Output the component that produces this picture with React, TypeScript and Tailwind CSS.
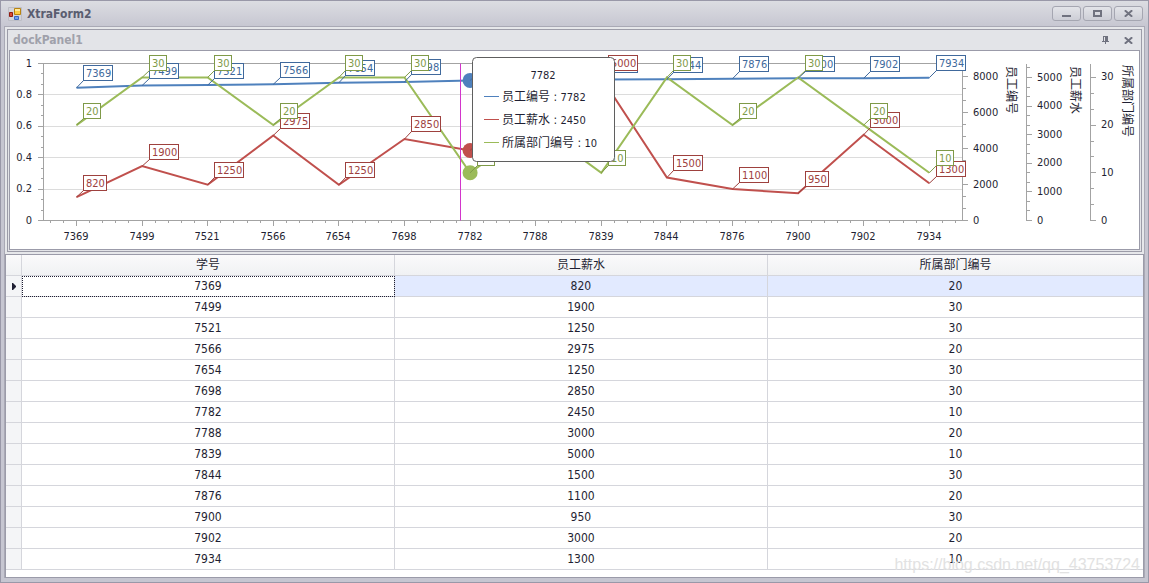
import { clsx } from 'clsx';
import type { ReactNode } from 'react';

type Employee = { id: number; salary: number; dept: number };

const employees: Employee[] = [
  { id: 7369, salary: 820, dept: 20 },
  { id: 7499, salary: 1900, dept: 30 },
  { id: 7521, salary: 1250, dept: 30 },
  { id: 7566, salary: 2975, dept: 20 },
  { id: 7654, salary: 1250, dept: 30 },
  { id: 7698, salary: 2850, dept: 30 },
  { id: 7782, salary: 2450, dept: 10 },
  { id: 7788, salary: 3000, dept: 20 },
  { id: 7839, salary: 5000, dept: 10 },
  { id: 7844, salary: 1500, dept: 30 },
  { id: 7876, salary: 1100, dept: 20 },
  { id: 7900, salary: 950, dept: 30 },
  { id: 7902, salary: 3000, dept: 20 },
  { id: 7934, salary: 1300, dept: 10 },
];

// Plot area in svg units
const LEFT = 43.5;
const RIGHT = 962.5;
const TOP = 63.5;
const BOTTOM = 220.5;
const STEP = 65.6;
const FIRST = 76.5;
const AXIS = '#a3a3a3';

const series = [
  { key: 'id', name: '员工编号', color: '#4f81bd', label: '#40699c', perUnit: 0.018 },
  { key: 'salary', name: '员工薪水', color: '#c0504d', label: '#9e413e', perUnit: 0.0286 },
  { key: 'dept', name: '所属部门编号', color: '#9bbb59', label: '#7f9a48', perUnit: 4.77 },
] as const;

const rightAxes = [
  { x: 962.5, step: 2000, perUnit: 0.018, max: 8000, title: '员工编号', titleX: 1007, titleY: 66 },
  { x: 1026.5, step: 1000, perUnit: 0.0286, max: 5000, title: '员工薪水', titleX: 1071, titleY: 66 },
  { x: 1090.5, step: 10, perUnit: 4.77, max: 30, title: '所属部门编号', titleX: 1123, titleY: 65 },
];

const px = (i: number) => FIRST + i * STEP;
const snap = (v: number) => Math.floor(v) + 0.5;

function LeftAxis() {
  return (
    <g stroke={AXIS} shapeRendering="crispEdges">
      <line x1={LEFT} y1={TOP} x2={LEFT} y2={BOTTOM} />
      {Array.from({ length: 16 }, (_, k) => {
        const y = snap(BOTTOM - (k * (BOTTOM - TOP)) / 15);
        return <line key={k} x1={k % 3 === 0 ? 38 : 41} y1={y} x2={LEFT} y2={y} />;
      })}
    </g>
  );
}

function BottomAxis() {
  return (
    <g stroke={AXIS} shapeRendering="crispEdges">
      <line x1={LEFT} y1={BOTTOM} x2={RIGHT} y2={BOTTOM} />
      {Array.from({ length: 70 }, (_, k) => {
        const x = snap(FIRST + ((k - 2) * STEP) / 5);
        return <line key={k} x1={x} y1={BOTTOM} x2={x} y2={(k - 2) % 5 === 0 ? 226 : 223} />;
      })}
    </g>
  );
}

function RightAxis({ axis }: { axis: (typeof rightAxes)[number] }) {
  const ticks: ReactNode[] = [];
  for (let k = 0; ; k++) {
    const y = BOTTOM - (k * axis.step * axis.perUnit) / 3;
    if (y < TOP) break;
    const major = k % 3 === 0;
    ticks.push(<line key={k} x1={axis.x} y1={snap(y)} x2={axis.x + (major ? 5 : 3)} y2={snap(y)} />);
  }
  const values = Array.from({ length: axis.max / axis.step + 1 }, (_, k) => k * axis.step);
  return (
    <g>
      <g stroke={AXIS} shapeRendering="crispEdges">
        <line x1={axis.x} y1={TOP} x2={axis.x} y2={BOTTOM} />
        {ticks}
      </g>
      {values.map((v) => (
        <text key={v} x={Math.floor(axis.x) + 11} y={Math.round(BOTTOM - v * axis.perUnit) + 3}>
          {v}
        </text>
      ))}
      <text transform={`translate(${axis.titleX} ${axis.titleY}) rotate(90)`} fontSize="12">
        {axis.title}
      </text>
    </g>
  );
}

function PointLabel({ x, y, text, color }: { x: number; y: number; text: string; color: string }) {
  const left = snap(x + 7);
  const top = snap(y - 22);
  return (
    <g>
      <line x1={x} y1={y} x2={left} y2={top + 15} stroke={color} />
      <rect x={left} y={top} width={text.length * 6 + 5} height="15" fill="#fff" stroke={color} />
      <text x={left + 2.5} y={top + 11.5} fill={color}>
        {text}
      </text>
    </g>
  );
}

function ChartTooltip({ item }: { item: Employee }) {
  return (
    <g>
      <rect x="472.5" y="57.5" width="142" height="104" rx="4" fill="#fff" stroke="#5f5f5f" />
      <text x="543" y="79" textAnchor="middle">
        {item.id}
      </text>
      {series.map((s, i) => (
        <g key={s.key}>
          <line x1="484" y1={96.5 + i * 23} x2="499" y2={96.5 + i * 23} stroke={s.color} />
          <text x="502" y={101 + i * 23}>
            <tspan fontSize="12">{s.name} : </tspan>
            {item[s.key]}
          </text>
        </g>
      ))}
    </g>
  );
}

function Chart() {
  const active = 6;
  return (
    <svg
      viewBox="10 51 1129 198"
      className="block w-full font-['DejaVu_Sans_Condensed','Noto_Sans','Noto_Sans_CJK_SC',sans-serif] text-[11px]"
      fill="#1f1f33"
    >
      {[1, 0.8, 0.6, 0.4, 0.2].map((v) => {
        const y = snap(BOTTOM - v * (BOTTOM - TOP));
        return (
          <line key={v} x1={LEFT} y1={y} x2={RIGHT} y2={y} stroke={v === 1 ? AXIS : '#dcdcdc'} shapeRendering="crispEdges" />
        );
      })}
      {[0, 0.2, 0.4, 0.6, 0.8, 1].map((v) => (
        <text key={v} x="32" y={Math.round(BOTTOM - v * (BOTTOM - TOP)) + 3} textAnchor="end">
          {v}
        </text>
      ))}
      <LeftAxis />
      <BottomAxis />
      {rightAxes.map((axis) => (
        <RightAxis key={axis.title} axis={axis} />
      ))}
      {employees.map((e, i) => (
        <text key={e.id} x={Math.floor(px(i))} y="240" textAnchor="middle">
          {e.id}
        </text>
      ))}

      {/* Series lines */}
      {series.map((s) => (
        <polyline
          key={s.key}
          points={employees.map((e, i) => `${px(i)},${BOTTOM - e[s.key] * s.perUnit}`).join(' ')}
          fill="none"
          stroke={s.color}
          strokeWidth="2"
        />
      ))}
      {series.map((s) => (
        <circle key={s.key} cx={px(active)} cy={BOTTOM - employees[active][s.key] * s.perUnit} r="7.5" fill={s.color} />
      ))}

      {/* Point labels */}
      {series.map((s) => (
        <g key={s.key}>
          {employees.map((e, i) => (
            <PointLabel key={e.id} x={px(i)} y={BOTTOM - e[s.key] * s.perUnit} text={String(e[s.key])} color={s.label} />
          ))}
        </g>
      ))}

      {/* Crosshair */}
      <line x1="460.5" y1={TOP} x2="460.5" y2={BOTTOM} stroke="#d235cb" />
      <ChartTooltip item={employees[active]} />
    </svg>
  );
}

function CaptionButton({ label, children }: { label: string; children: ReactNode }) {
  return (
    <button
      type="button"
      aria-label={label}
      className="flex h-[15px] w-[29px] items-center justify-center rounded-[3px] border border-[#a5a6b1] bg-linear-to-b from-[#e3e4e9] to-[#cdced6]"
    >
      {children}
    </button>
  );
}

function CloseGlyph() {
  return (
    <svg width="9" height="7" viewBox="0 0 9 7" fill="none" stroke="#70727f" strokeWidth="2">
      <path d="M0.800 0.300l7.400 6.400M8.200 0.300L0.800 6.700" />
    </svg>
  );
}

function TitleBar() {
  return (
    <header className="flex h-[25px] items-center justify-between pl-1 pr-[2px]">
      <div className="flex items-center gap-[5px]">
        <svg width="14" height="14" viewBox="0 0 14 14">
          <path d="M0.500 0.500h13v13h-13z" fill="#d3d4da" stroke="#bdbec6" />
          <path d="M1.500 5.500h3v4h-3z" fill="#d94a34" stroke="#8f1d12" />
          <path d="M6.500 1.500h6v6h-6z" fill="#fbcb45" stroke="#b98410" />
          <path d="M6.500 9.500h4v3h-4z" fill="#6fa0ee" stroke="#3a66c4" />
          <path d="M7 2h5v2H7z" fill="#ffe899" />
        </svg>
        <h1 className="text-[12px] leading-[16px] font-bold text-[#5a5d70]">XtraForm2</h1>
      </div>
      <div className="flex gap-[2px]">
        <CaptionButton label="Minimize">
          <span className="mt-1 h-[2px] w-[9px] bg-[#70727f]" />
        </CaptionButton>
        <CaptionButton label="Maximize">
          <span className="h-[7px] w-[9px] border-2 border-[#70727f]" />
        </CaptionButton>
        <CaptionButton label="Close">
          <CloseGlyph />
        </CaptionButton>
      </div>
    </header>
  );
}

function DockPanel() {
  return (
    <section className="border border-[#9c9ca8] bg-[#e3e4e8] px-px pb-px">
      <div className="flex h-5 items-center justify-between pl-1 pr-[7px]">
        <h2 className="text-[12px] leading-[16px] font-bold text-[#a0a1ab]">dockPanel1</h2>
        <div className="flex items-center gap-[15px]">
          <button type="button" aria-label="Auto hide">
            <svg width="7" height="8" viewBox="0 0 7 8" fill="#70727f">
              <path fillRule="evenodd" d="M1 0h5v5h1v1H4v2H3V6H0V5h1zM2 1v4h1V1z" />
            </svg>
          </button>
          <button type="button" aria-label="Close panel">
            <CloseGlyph />
          </button>
        </div>
      </div>
      <div className="border border-[#9b9ba9] bg-white">
        <Chart />
      </div>
    </section>
  );
}

function DataGrid() {
  const cell = 'h-[21px] border-b border-[#d5d6dc] px-0 pt-px pb-0 text-center leading-[19px] font-normal';
  return (
    <section className="flex-1 border border-[#9b9ba9] bg-white">
      <table className="w-full table-fixed border-separate border-spacing-0 text-[12px] text-[#1f1f33]">
        <thead>
          <tr className="bg-linear-to-b from-[#fafafb] to-[#f0f1f3]">
            <th className={clsx(cell, 'w-4 border-r border-[#c5c6ce]')} aria-label="Row" />
            <th className={clsx(cell, 'w-[32.8%] border-r border-[#c5c6ce]')}>学号</th>
            <th className={clsx(cell, 'w-[32.8%] border-r border-[#c5c6ce]')}>员工薪水</th>
            <th className={clsx(cell, 'border-[#c5c6ce]')}>所属部门编号</th>
          </tr>
        </thead>
        <tbody>
          {employees.map((e, i) => (
            <tr key={e.id} className={clsx(i === 0 && 'bg-[#e2eaff]')}>
              <td className={clsx(cell, 'border-r border-[#c5c6ce] bg-[#f4f5f7]')}>
                {i === 0 && (
                  <svg width="4" height="7" viewBox="0 0 4 7" className="mx-auto" fill="#1f1f33">
                    <path d="M0 0h1l3 3v1L1 7H0z" />
                  </svg>
                )}
              </td>
              <td className={clsx(cell, 'border-r', i === 0 && 'bg-white outline-1 -outline-offset-1 outline-dotted outline-[#1f1f33]')}>
                {e.id}
              </td>
              <td className={clsx(cell, 'border-r')}>{e.salary}</td>
              <td className={cell}>{e.dept}</td>
            </tr>
          ))}
        </tbody>
      </table>
    </section>
  );
}

export default function App() {
  return (
    <div className="relative flex min-h-screen flex-col border border-[#9998a8] bg-[#c9c9d3] bg-linear-to-b from-[#dcdde2] to-[#c6c6d1] to-[26px] px-[3px] pb-1 font-['DejaVu_Sans_Condensed','Noto_Sans','Noto_Sans_CJK_SC',sans-serif]">
      <TitleBar />
      <main className="flex flex-1 flex-col border border-b-0 border-[#a9a9b5] bg-[#e6e7ea]">
        <div className="p-[2px]">
          <DockPanel />
        </div>
        <DataGrid />
      </main>
      <p className="pointer-events-none absolute right-2 bottom-2 font-['Liberation_Sans',sans-serif] text-[16px] leading-[18px] text-[#e2e2e2]">
        https://blog.csdn.net/qq_43753724
      </p>
    </div>
  );
}
